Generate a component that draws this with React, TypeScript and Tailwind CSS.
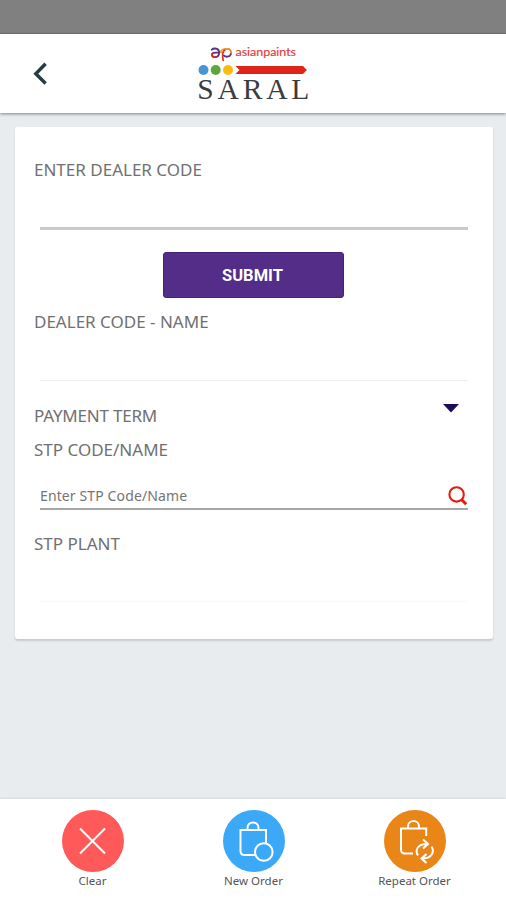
import type { ReactNode } from "react";

function Logo() {
  return (
    <svg width="120" height="64" viewBox="0 0 120 64" className="shrink-0" role="img" aria-label="Asian Paints Saral">
      <g fill="none" strokeLinecap="round" strokeLinejoin="round">
        <path d="M15.8 6.6 C17.3 5 20.9 5 22.3 6.8" stroke="#56318c" strokeWidth="2" />
        <path d="M22.3 6.8 C24.3 9.4 23 14.2 19.1 14.2 C15.7 14.2 14.9 10.5 17.8 9.8 C19.8 9.4 22.3 10 24.7 9.2" stroke="#56318c" strokeWidth="1.8" />
        <path d="M16.5 10.4 C14.9 12.4 16.9 14.8 19.8 13.9" stroke="#e52b20" strokeWidth="1.8" />
        <path d="M24.7 9.2 C25.5 7.2 27.3 5.8 29.3 6.3" stroke="#f6a41c" strokeWidth="1.7" />
        <path d="M27.2 17.4 C26.5 14 25.6 8.4 29.4 6.4" stroke="#e5371e" strokeWidth="1.8" />
        <path d="M29.4 6.4 C33.9 4.8 36.1 8.2 34.8 11.2" stroke="#f08a1c" strokeWidth="1.8" />
        <path d="M34.8 11.2 C33.6 14.3 29.7 14.3 27.8 12.5" stroke="#5e318b" strokeWidth="1.8" />
      </g>
      <text x="39.5" y="13" textLength="60.5" lengthAdjust="spacingAndGlyphs" fontFamily="Lato, sans-serif" fontSize="12" fill="#e63b3b" stroke="#e63b3b" strokeWidth=".2">asianpaints</text>
      <circle cx="7.5" cy="27" r="5" fill="#4795d3" />
      <circle cx="19.7" cy="27" r="5" fill="#5ca83b" />
      <circle cx="32" cy="27" r="5" fill="#ffba0b" />
      <path d="M39.5 22.9 H107 L110.9 27 L107 31.1 H39.5 L43.5 27 Z" fill="#df241b" />
      <text x="1.3" y="56.4" textLength="112" lengthAdjust="spacing" fontFamily="'Liberation Serif', serif" fontSize="29.5" fill="#3a3d40">SARAL</text>
    </svg>
  );
}

function Label({ children, className = "" }: { children: string; className?: string }) {
  return (
    <div className={`h-6 shrink-0 font-['Noto_Sans',sans-serif] text-[17px] leading-[23px] whitespace-nowrap text-[#707070] ${className}`}>
      {children}
    </div>
  );
}

function Action({ color, label, children }: { color: string; label: string; children: ReactNode }) {
  return (
    <button className="flex w-[161px] flex-col items-center">
      <svg width="62" height="62" viewBox="0 0 62 62" fill="none" stroke="white" strokeWidth="2">
        <circle cx="31" cy="31" r="31" fill={color} stroke="none" />
        {children}
      </svg>
      <span className="font-['Noto_Sans',sans-serif] text-[11.5px] leading-[18px] text-[#555555]">{label}</span>
    </button>
  );
}

export default function App() {
  return (
    <div className="flex h-[900px] w-[506px] flex-col overflow-hidden bg-[#e8ecef]">
      <div className="h-[34px] shrink-0 border-b border-[#737373] bg-[#808080]" />
      <header className="z-10 flex h-[79px] shrink-0 items-start bg-white pl-[32px] shadow-[0_1px_3px_rgba(0,0,0,0.45)]">
        <button aria-label="Back" className="mt-[28px] mr-[148px]">
          <svg width="16" height="24" viewBox="0 0 16 24" fill="none" stroke="#273b43" strokeWidth="3.4">
            <path d="M13.6 1.8 L3.8 11.7 L13.6 21.5" />
          </svg>
        </button>
        <div className="mt-[9px]">
          <Logo />
        </div>
      </header>

      <main className="mt-[14px] ml-[14.5px] flex h-[512px] w-[478px] shrink-0 flex-col rounded-[3px] bg-white pr-[24.5px] pl-[19.5px] shadow-[0_2px_2px_rgba(0,0,0,0.14)]">
        <Label className="mt-[31px]">ENTER DEALER CODE</Label>
        <div className="mt-[45px] ml-[6px] h-[3px] shrink-0 bg-[#cacaca]" />
        <button className="mt-[22px] ml-[129px] flex h-[46px] w-[181px] shrink-0 items-center justify-center rounded-[3px] border border-[#47207c] bg-[#532d87] pt-[2px] pr-[2px] font-['Roboto',sans-serif] text-[16.5px] font-bold text-white">
          SUBMIT
        </button>
        <Label className="mt-[12px]">DEALER CODE - NAME</Label>
        <div className="mt-[46px] ml-[6px] h-px shrink-0 bg-[#eeeeee]" />
        <div className="mt-[23px] flex h-6 shrink-0 justify-between">
          <Label className="tracking-[-0.2px]">PAYMENT TERM</Label>
          <svg width="16" height="9" viewBox="0 0 16 9" className="mr-[9px]">
            <path d="M0 0 H16 L8 8.5 Z" fill="#1c0c59" />
          </svg>
        </div>
        <Label className="mt-[10px]">STP CODE/NAME</Label>
        <div className="mt-[22px] ml-[6px] flex h-[26px] shrink-0 items-start justify-between border-b-2 border-[#a6a6a6]">
          <span className="font-['Noto_Sans',sans-serif] text-[14px] leading-6 tracking-[0.12px] text-[#747474]">Enter STP Code/Name</span>
          <svg width="20" height="20" viewBox="0 0 20 20" fill="none" stroke="#e81a12" className="mt-[2px]">
            <circle cx="8.6" cy="8.4" r="7.2" strokeWidth="2.1" />
            <path d="M13.6 13.6 L18.2 18.2" strokeWidth="3" />
          </svg>
        </div>
        <Label className="mt-[22px]">STP PLANT</Label>
        <div className="mt-[45px] ml-[6px] h-px shrink-0 bg-[#f8f8f8]" />
      </main>

      <footer className="mt-auto flex h-[101px] shrink-0 justify-center bg-white pt-[11px] pl-px shadow-[0_-1px_2px_rgba(0,0,0,0.08)]">
        <Action color="#ff5959" label="Clear">
          <path d="M18 18.5 L43 43.5 M43 18.5 L18 43.5" />
        </Action>
        <Action color="#3ba9f8" label="New Order">
          <path d="M43 34 V20 H17.5 V41 Q17.5 45 21.5 45 H33" />
          <path d="M24.5 19.5 V18 C24.5 10.5 35.5 10.5 35.5 18 V19.5" />
          <circle cx="40.8" cy="42" r="8.8" fill="#3ba9f8" />
        </Action>
        <Action color="#e98617" label="Repeat Order">
          <path d="M42.2 26 V18.5 H17 V39.5 Q17 43.5 21 43.5 H29" />
          <path d="M24 18 V16.5 C24 9.2 35 9.2 35 16.5 V18" />
          <path d="M34 45.5 C30.5 40 34 33.5 43.5 34 M39 29.5 L44 34 L39 38.5 M47.5 36.5 C51 42 47.5 48.5 38 48.5 M42.5 44 L37.5 48.5 L42.5 53" />
        </Action>
      </footer>
    </div>
  );
}
